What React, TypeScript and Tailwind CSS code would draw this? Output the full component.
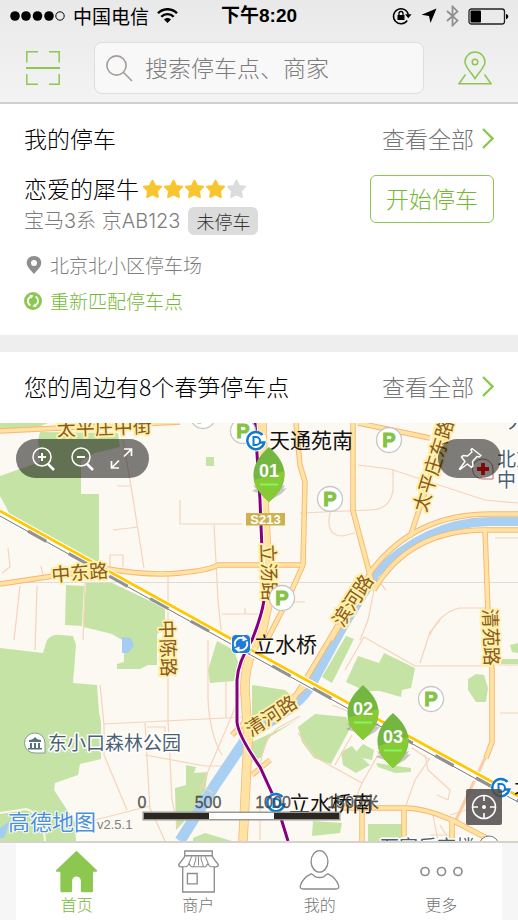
import { ReactNode } from "react";

const cjk = "font-['Noto_Sans_CJK_SC',sans-serif]";
const GREEN = "#8cc850";

function StatusBar() {
  return (
    <div className="grid h-8 grid-cols-[1fr_auto_1fr] items-center px-[9px] text-black">
      <div className="flex items-center gap-2">
        <svg width="56" height="12" viewBox="0 0 56 12" aria-hidden="true">
          {[6, 17, 28.5, 40].map((cx) => (
            <circle key={cx} cx={cx} cy="6" r="4.8" />
          ))}
          <circle cx="51" cy="6" r="4.2" fill="none" stroke="#000" />
        </svg>
        <span className="text-[19px] leading-6">中国电信</span>
        <svg width="21" height="16" viewBox="0 0 21 16" fill="none" stroke="#000" strokeWidth="2.4" aria-hidden="true">
          <path d="M1 5.3C6-.2 15-.2 20 5.3M4.3 8.8c3.4-3.6 9-3.6 12.4 0" />
          <path d="M7 11.6c2-2 5-2 7 0L10.500 15z" fill="#000" stroke="none" />
        </svg>
      </div>
      <span className="font-['Liberation_Sans','Noto_Sans_CJK_SC',sans-serif] text-[19px] font-bold leading-6">
        下午8:20
      </span>
      <div className="flex items-center justify-end gap-[9px]">
        <svg width="20" height="18" viewBox="0 0 20 18" aria-hidden="true">
          <path d="M15.200 13.500A7.500 7.500 0 1 1 16.300 7.500" fill="none" stroke="#000" strokeWidth="1.500" />
          <path d="M13 7.200h6.600l-3.300 4z" />
          <rect x="5.500" y="8" width="7" height="5" />
          <path d="M7 8V6.500a2 2 0 0 1 4 0V8" fill="none" stroke="#000" strokeWidth="1.300" />
        </svg>
        <svg width="16" height="16" viewBox="0 0 16 16" aria-hidden="true">
          <path d="M15.500.500 9.500 15 8 8 .500 6.800z" />
        </svg>
        <svg width="13" height="22" viewBox="0 0 13 22" fill="none" stroke="#8e8e8e" strokeWidth="1.700" aria-hidden="true">
          <path d="M1 6l10.500 9.500L6.500 20.500v-19l5 5L1 16" />
        </svg>
        <svg width="41" height="17" viewBox="0 0 41 17" aria-hidden="true">
          <rect x="1" y="1" width="35.500" height="15" rx="2.500" fill="none" stroke="#222" strokeWidth="1.300" />
          <rect x="2.500" y="2.500" width="10.500" height="12" rx="1" />
          <path d="M38 6c3 .500 3 4.500 0 5z" />
        </svg>
      </div>
    </div>
  );
}

function SearchHeader() {
  return (
    <header className="border-b-2 border-[#d0d0d0] bg-linear-to-b from-[#e9e9e9] to-[#f3f3f3] pb-2">
      <StatusBar />
      <div className="mt-[10px] flex items-center gap-[34px] px-[26px]">
        <button type="button" aria-label="扫一扫">
          <svg width="34" height="34" viewBox="0 0 34 34" fill="none" stroke={GREEN} strokeWidth="1.500">
            <path d="M.800 11.500V.800H12M23 .800h10.200v10.700M.800 23v10.200H12M23 33.200h10.200V23" />
            <path d="M0 17h34" strokeWidth="2" />
          </svg>
        </button>
        <label className="flex h-[52px] min-w-0 flex-1 items-center gap-3 rounded-lg border border-[#dedede] bg-[#f8f8f8] px-[11px]">
          <svg className="shrink-0" width="27" height="27" viewBox="0 0 27 27" fill="none" stroke="#a39c99" strokeWidth="1.600" aria-hidden="true">
            <circle cx="10.500" cy="10.500" r="9.600" />
            <path d="M17.500 17.500l8.500 8.500" />
          </svg>
          <input
            type="search"
            aria-label="搜索"
            placeholder="搜索停车点、商家"
            className="w-full min-w-0 bg-transparent pb-[2px] text-[23px] font-light outline-none placeholder:text-[#7c7c7c]"
          />
        </label>
        <button type="button" aria-label="地图">
          <svg width="34" height="34" viewBox="0 0 34 34" fill="none" stroke={GREEN} strokeWidth="1.500">
            <path d="M17 27.500C13 21 7 16 7 11a10 10 0 0 1 20 0c0 5-6 10-10 16.500z" />
            <circle cx="17" cy="11" r="2.800" />
            <path d="M7.500 23.500L1 32.700h32l-6.500-9.200" />
          </svg>
        </button>
      </div>
    </header>
  );
}

function SectionTitle({ children }: { children: ReactNode }) {
  return (
    <div className="flex h-[71px] items-center justify-between px-6 pb-[2px] text-[23px]">
      <h2 className="font-light text-black">{children}</h2>
      <a href="#all" className="flex items-center gap-2 font-light text-[#757575]">
        查看全部
        <svg width="12" height="21" viewBox="0 0 12 21" fill="none" stroke={GREEN} strokeWidth="2.400" aria-hidden="true">
          <path d="M1 1l9.500 9.500L1 20" />
        </svg>
      </a>
    </div>
  );
}

function MyParking() {
  return (
    <section className="bg-white pb-4">
      <SectionTitle>我的停车</SectionTitle>
      <div className="flex items-start justify-between px-6">
        <div>
          <div className="flex h-7 items-center gap-[3px]">
            <span className="pb-[2px] text-[23px] font-light leading-7 text-black">恋爱的犀牛</span>
            <div className="flex" role="img" aria-label="4 / 5">
              {[1, 2, 3, 4, 5].map((n) => (
                <svg key={n} width="21" height="20" viewBox="0 0 21 20" fill={n < 5 ? "#f9c52f" : "#dcdcdc"}>
                  <path
                    d="M10.500 1.500l2.700 5.300 6 .900-4.200 4.400 1 6-5.500-2.700-5.500 2.700 1-6L1.800 7.700l6-.900z"
                    stroke={n < 5 ? "#f9c52f" : "#dcdcdc"}
                    strokeWidth="1.800"
                    strokeLinejoin="round"
                  />
                </svg>
              ))}
            </div>
          </div>
          <div className="flex h-9 items-center gap-2">
            <span className="font-['Inter','Noto_Sans_CJK_SC',sans-serif] text-xl font-light text-[#7c7c7c]">
              宝马3系 京AB123
            </span>
            <span className="rounded-md bg-[#dcdcdc] px-2 text-[18px] font-light leading-7 text-[#333]">未停车</span>
          </div>
        </div>
        <button
          type="button"
          className="h-12 rounded-md border border-[#8cc850] px-[15px] pb-[2px] text-[23px] font-light text-[#76b836]"
        >
          开始停车
        </button>
      </div>
      <div className="mt-2 flex h-9 items-center gap-2 px-6 text-[19px] font-light text-[#7c7c7c]">
        <svg width="18" height="18" viewBox="0 0 18 18" aria-hidden="true">
          <path d="M10 0C5.500 0 2.700 3 2.700 6.800 2.700 11 7 14.500 10 18c3-3.500 7.300-7 7.300-11.200C17.300 3 14.500 0 10 0zm0 4a3 3 0 1 1 0 6 3 3 0 0 1 0-6z" fill="#8e8e8e" />
        </svg>
        北京北小区停车场
      </div>
      <button type="button" className="flex h-9 items-center gap-2 px-6 text-[19px] font-light text-[#76b836]">
        <svg width="18" height="18" viewBox="0 0 18 18" aria-hidden="true">
          <circle cx="9" cy="9" r="9" fill={GREEN} />
          <g fill="none" stroke="#fff" strokeWidth="1.700">
            <path d="M6.500 13.500C3 11.500 3 6.500 6.800 4.600M11.500 4.500c3.500 2 3.500 7-.300 8.900" />
          </g>
          <path d="M5.500 2.800l4 .700-2.500 3.200zM12.500 15.200l-4-.700 2.500-3.200z" fill="#fff" />
        </svg>
        重新匹配停车点
      </button>
    </section>
  );
}

const parks = [
  "M0 423H48L36 428 0 430Z",
  "M0 476L40 462 38 440 40 432 118 433 120 447 95 453 81 461V494H99V567L88 562 10 515 5 505 0 496Z",
  "M66 585L84 586 82 626 65 625Z",
  "M86 582H110L165 608V628L157 634V665L148 665 140 669H117V664L124 662V641L112 634 96 630 83 627Z",
  "M0 648L43 653 47 640Q52 634 60 635L73 636 76 645 73 683 97 685 99 712 101 722V759L80 764 78 775 55 783 54 790 75 822 76 841H0Z",
  "M217 641L234 650 238 662 234 681 210 683 208 670Z",
  "M186 765L196 767 194 773 208 772 205 790 190 815 176 830 175 788 186 785Z",
  "M193 838L205 833 232 841H193Z",
  "M346 636L354 639 332 683 322 677Z",
  "M358 656L379 663 384 653 415 668 411 688 402 690 401 697 380 691 365 691 346 682Z",
  "M252 685L285 690 292 696 270 712 252 722Z",
  "M321 690L300 718 268 738 262 757 252 762V742L282 728 300 718Z",
  "M298 727L315 714 346 717 352 725 331 764 314 758 302 742Z",
  "M341 752L352 746 360 756 370 765 356 773 343 765ZM356 752L363 744 374 750 372 760 362 758Z",
  "M376 763L411 768V772L395 773 378 767Z",
  "M468 679L476 674 484 675 488 688 486 702H476L468 690Z",
  "M510 645L518 643V653L512 652ZM501 659H518V664H501Z",
  "M313 821L342 823 340 833 312 836Z",
  "M368 824H402V841H368Z",
  "M206 457H214V466H206Z",
];

const lanes = [
  "M123 440L130 480 144 568M117 486H130M113 530L138 527M110 567V555H123V567M180 500V524H243",
  "M214 525L218 600 222 640M168 575V600L168 720 172 800 178 828M165 608L210 630M222 614H258M245 614V608",
  "M8 548L10 567 2 573M41 566L43 575M20 586L14 640M37 586L35 650M85 582L83 640",
  "M100 685L104 725V755L127 810M104 724L245 717M145 723L150 810M145 755L205 766H222M147 727H165V735",
  "M208 640V700Q210 735 222 755M226 680V718M246 680L230 720 200 790M75 825L150 806M200 785L213 793M150 808L165 841",
  "M358 465L390 469 485 500 518 503M393 469V490Q390 510 370 510L300 513M330 513Q325 535 342 536L355 533",
  "M290 602H305M374 590L368 620 360 640M386 590L380 583M430 635Q440 612 460 608H486M495 538H518",
  "M364 637L415 666H495M420 663L430 632 440 620M364 637L345 670M500 713H518M498 665H518",
  "M300 716L278 728Q262 740 260 770M298 733L315 757 362 783 357 795M335 765L352 735M362 783L378 755 390 735M430 758L415 780 405 808",
  "M425 755L428 770 450 790 448 800 437 795M432 810L438 841M500 800L450 815M412 748L430 760M332 705L350 712",
  "M260 840V800M440 825L450 841M430 835H450",
];

const roads = [
  "M0 431L60 428 180 422",
  "M0 584L60 575 108 569Q150 576 180 573T218 565H303",
  "M296 423L300 465 305 482 303 565 286 603 268 638",
  "M353 423V511L374 590",
  "M358 423L430 438",
  "M448 423L410 537",
  "M374 590Q410 528 490 530H518",
  "M232 735L245 722M331 640L372 570Q415 514 490 514H518M338 625L309 674 290 705M310 682L290 700",
  "M485 530L489 640 492 670V742L486 758",
  "M340 808H405Q425 808 452 820L492 841M362 800V841M404 808V841M452 820V841",
  "M252 775L270 760",
];

const mainRoad = "M262 423L264 500 269 600 262 632Q244 660 245 690L248 740 243 841";
const subway = "M255 423L260 500 264 600Q262 615 252 640 238 662 237 680V722Q238 735 260 767L276 802 288 841";

const roadLabels = [
  { text: "太平庄中街", x: 57, y: 436, rotate: -2 },
  { text: "中东路", x: 52, y: 582, rotate: -5 },
  { text: "立汤路", x: 261, y: 544, rotate: 88 },
  { text: "中陈路", x: 160, y: 620, rotate: 88 },
  { text: "清苑路", x: 483, y: 609, rotate: 88 },
  { text: "太平庄东路", x: 426, y: 513, rotate: -73 },
  { text: "滨河路", x: 343, y: 628, rotate: -57 },
  { text: "清河路", x: 251, y: 737, rotate: -33 },
];

const parkingSpots = [
  [203, 416],
  [243, 431],
  [389, 440],
  [330, 499],
  [282, 598],
  [431, 699],
];

function StationMark({ x, y }: { x: number; y: number }) {
  return (
    <g transform={`translate(${x} ${y})`} fill="none" stroke="#0f7bd0">
      <circle r="10.500" fill="#fff" stroke="none" />
      <path d="M6.500 -6A8.600 8.600 0 1 0 8.300 1.500H3.500" strokeWidth="2.500" />
      <path d="M-2.500 -4H0A4 4 0 0 1 0 4H-2.500Z" strokeWidth="2" />
    </g>
  );
}

function MapCanvas() {
  return (
    <svg
      className="absolute inset-0 h-full w-full"
      viewBox="0 423 518 418"
      preserveAspectRatio="xMidYMid slice"
      fontFamily="'Noto Sans CJK SC', sans-serif"
    >
      <rect y="423" width="518" height="418" fill="#fcf9f3" />
      <g fill="#c5e3a5">
        {parks.map((d) => (
          <path key={d} d={d} />
        ))}
      </g>
      <path d="M122 637L131 638 134 646 128 653 122 653ZM0 828L10 821 4 838H0Z" fill="#a5cdf3" />
      <path d="M0 813L26 809Q36 812 43 823L45 841" fill="none" stroke="#fdf6ea" strokeWidth="2" />
      <g fill="none" stroke="#a9cff2">
        <path d="M518 521.500H490Q425 522 372 577" strokeWidth="9" />
        <path d="M374 575L343 625 312 682Q302 705 250 733L215 785 180 841" strokeWidth="11" />
      </g>
      <g fill="none" stroke="#f7d3ba" strokeWidth="1.200">
        {lanes.map((d) => (
          <path key={d} d={d} />
        ))}
      </g>
      <path d="M0 582.500H518" stroke="#dcdcd8" strokeWidth="1" />
      <g fill="none" stroke="#f9b573" strokeWidth="5.500" strokeLinejoin="round">
        <path d="M486 756L455 822" strokeWidth="3" stroke="#f9cda5" />
        {roads.map((d) => (
          <path key={d} d={d} />
        ))}
        <path d={mainRoad} strokeWidth="9.500" />
      </g>
      <g fill="none" stroke="#fee3a2" strokeWidth="3.700" strokeLinejoin="round">
        {roads.map((d) => (
          <path key={d} d={d} />
        ))}
        <path d={mainRoad} strokeWidth="8" />
      </g>

      <g fill="none">
        <path d="M0 515L258 658 518 802" stroke="#fff" strokeWidth="5" />
        <path d="M0 516L258 659 518 802" stroke="#777" strokeWidth="1" />
        <path d="M28 531L258 658 518 801" stroke="#929292" strokeWidth="3.500" strokeDasharray="21 25.500" />
        <path d="M0 511L235 641 310 682 412 738 518 796" stroke="#fff" strokeWidth="5" />
        <path d="M0 511L235 641 310 682 412 738 518 796" stroke="#ffc800" strokeWidth="2.800" />
        <path d={subway} stroke="#fff" strokeWidth="5" />
        <path d={subway} stroke="#86007e" strokeWidth="3" />
      </g>

      <rect x="246" y="513" width="39" height="12.500" fill="#cdb24f" />
      <text
        x="265.500"
        y="523.500"
        fontFamily="'Liberation Sans', sans-serif"
        fontSize="13"
        fontWeight="700"
        textAnchor="middle"
        fill="#fff"
      >
        S213
      </text>

      <g fontSize="19" fill="#8a5a1c" stroke="#fff0a8" strokeWidth="4" strokeLinejoin="round" paintOrder="stroke">
        {roadLabels.map((l) => (
          <text key={l.text} transform={`translate(${l.x} ${l.y}) rotate(${l.rotate})`}>
            {l.text}
          </text>
        ))}
      </g>

      {parkingSpots.map(([x, y]) => (
        <g key={`${x}-${y}`}>
          <circle cx={x} cy={y} r="12.500" fill="#fff" stroke="#c6c6c6" strokeWidth="1.300" />
          <text
            x={x}
            y={y + 7}
            fontFamily="'Liberation Sans', sans-serif"
            fontSize="20"
            fontWeight="700"
            textAnchor="middle"
            fill="#84c343"
            stroke="#84c343"
            strokeWidth="1"
          >
            P
          </text>
        </g>
      ))}

      <StationMark x={256} y={441} />
      <StationMark x={276} y={803} />
      <StationMark x={501} y={788} />
      <g transform="translate(241 644)" fill="none" stroke="#fff">
        <rect x="-9.500" y="-9.500" width="19" height="19" rx="4" fill="#1f7bd9" />
        <path d="M-5.600 2.500A6.100 6.100 0 0 1 2 -5.800M5.600 -2.500A6.100 6.100 0 0 1 -2 5.800" strokeWidth="1.900" />
        <path d="M1.500 -8.500L6.500 -4.500 1.500 -2.500ZM-1.500 8.500L-6.500 4.500 -1.500 2.500Z" fill="#fff" stroke="none" />
      </g>

      <g fill="#4c5f73" fontSize="19" stroke="#fff" strokeWidth="3" strokeLinejoin="round" paintOrder="stroke">
        <text x="48" y="750">东小口森林公园</text>
        <text x="497" y="466">北京</text>
        <text x="497" y="487">中日</text>
        <text x="508" y="428">大</text>
        <text x="380" y="854">万家乐商楼</text>
      </g>
      <g transform="translate(35 743)">
        <path d="M-1 -10A10 10 0 1 0 0 10H10V0A10 10 0 0 0 -1 -10Z" fill="#fff" stroke="#8b9a91" />
        <path d="M-6 -3Q-2 -3 0 -6 2 -3 6 -3V-1H-6ZM-5 0H-3V5H-5ZM-1 0H1V5H-1ZM3 0H5V5H3ZM-7 5H7V6.500H-7Z" fill="#56707e" />
      </g>
      <g transform="translate(483 469)">
        <path d="M-1 -10A10 10 0 1 0 0 10H10V0A10 10 0 0 0 -1 -10Z" fill="#fff" fillOpacity=".25" stroke="#b07a7a" />
        <path d="M-6 0H6M0 -6V6" stroke="#ff1010" strokeWidth="3.800" />
      </g>
      <circle cx="489" cy="846" r="10" fill="#fff" stroke="#777" />

      <g fill="#111" fontSize="21">
        <text x="269" y="448">天通苑南</text>
        <text x="254" y="652">立水桥</text>
        <text x="289" y="811">立水桥南</text>
        <text x="514" y="795">北</text>
      </g>

      <g
        fill="#444"
        fillOpacity=".85"
        fontFamily="'Liberation Sans', 'Noto Sans CJK SC', sans-serif"
        fontSize="16"
        textAnchor="middle"
        stroke="#444"
        strokeWidth=".3"
      >
        <text x="142" y="808">0</text>
        <text x="208" y="808">500</text>
        <text x="273" y="808">1000</text>
        <text x="353" y="808">1500米</text>
      </g>
      <rect x="142.500" y="811.500" width="198" height="9" fill="#999" />
      <path d="M144 813H209V819H144ZM274 813H339V819H274Z" fill="#2c2620" />
      <path d="M209 813H274V819H209Z" fill="#fdfdfb" />

      <text x="8" y="830" fontSize="22" fill="#4a90dc" stroke="#fff" strokeWidth="2" strokeLinejoin="round" paintOrder="stroke">
        高德地图
      </text>
      <text x="97" y="829" fontSize="13" fontFamily="'Liberation Sans', sans-serif" fill="#808080">
        v2.5.1
      </text>
    </svg>
  );
}

function LeafPin({ label, className }: { label: string; className: string }) {
  return (
    <button type="button" className={`absolute h-14 w-8 ${className}`}>
      <svg className="absolute inset-0 overflow-visible" width="32" height="56" viewBox="0 0 32 56" aria-hidden="true">
        <path d="M8 47L-1 44 3 42 0 38 16 42 32 38 30 42 34 41 28 47 16 54Z" fill="#666" opacity=".35" />
        <path d="M16 0C26 9 32 18 31.500 29S24 48 16 55C8 48 1 40 .500 29S6 9 16 0Z" fill="#74b740" />
        <path d="M31.500 24C32 38 24 48 16 55 8 48 2 41 .800 33Z" fill="#86ca36" />
        <path d="M7 37.500H25" stroke="#85f562" strokeWidth="2" />
      </svg>
      <span className="absolute inset-x-0 top-3 text-center font-['Liberation_Sans',sans-serif] text-[18px] font-bold leading-6 text-white">
        {label}
      </span>
    </button>
  );
}

function NearbyMap() {
  return (
    <div className="relative min-h-[417px] flex-1 overflow-hidden">
      <MapCanvas />
      <LeafPin label="01" className="left-[253px] top-6" />
      <LeafPin label="02" className="left-[347px] top-[262px]" />
      <LeafPin label="03" className="left-[377px] top-[290px]" />

      <div className="absolute left-4 top-4 flex h-[39px] items-center gap-4 rounded-full bg-black/50 px-4">
        <button type="button" aria-label="放大">
          <svg width="23" height="24" viewBox="0 0 23 24" fill="none" stroke="#fff">
            <circle cx="10" cy="10" r="9" strokeWidth="1.500" />
            <path d="M10 6v8M6 10h8" strokeWidth="2" />
            <path d="M16 17l6 6" strokeWidth="2.500" />
          </svg>
        </button>
        <button type="button" aria-label="缩小">
          <svg width="23" height="24" viewBox="0 0 23 24" fill="none" stroke="#fff">
            <circle cx="10" cy="10" r="9" strokeWidth="1.500" />
            <path d="M6 10h8" strokeWidth="2" />
            <path d="M16 17l6 6" strokeWidth="2.500" />
          </svg>
        </button>
        <button type="button" aria-label="全屏">
          <svg width="23" height="23" viewBox="0 0 23 23" fill="none" stroke="#fff" strokeWidth="1.700">
            <path d="M14 2h7.500v7M21.500 2L14 9.500M1.500 14v7H9M1.500 21L9 13.500" />
          </svg>
        </button>
      </div>

      <button
        type="button"
        aria-label="固定"
        className="absolute right-[17px] top-4 flex h-[39px] w-[63px] items-center justify-center rounded-full bg-black/50"
      >
        <svg width="24" height="24" viewBox="0 0 24 24" fill="none" stroke="#fff" strokeWidth="1.500" strokeLinejoin="round">
          <path d="M14 1.500l9 7-2 1.500-2-.500-4.500 5 .500 4.500-1.500 1.500-4-3.500-7.500 5.500-.500-.500 5.500-7.500L3.500 10 5 8.500l4.500.500L14 5l-1-2z" />
        </svg>
      </button>

      <button
        type="button"
        aria-label="定位"
        className="absolute bottom-4 right-4 flex size-9 items-center justify-center rounded-xs bg-[#4f4b4b]/85"
      >
        <svg width="26" height="26" viewBox="0 0 26 26" fill="none" stroke="#fff" strokeWidth="1.600">
          <circle cx="13" cy="13" r="11.500" />
          <path d="M13 1.500V7M13 19v5.500M1.500 13H7M19 13h5.500" />
          <circle cx="13" cy="13" r="2" fill="#fff" stroke="none" />
        </svg>
      </button>
    </div>
  );
}

const tabs = [
  {
    label: "首页",
    icon: (
      <path
        d="M63 2L124 60Q126 64 122 65H112V122Q112 126 108 126H80Q76 126 76 122V92A13 13 0 0 0 50 92V122Q50 126 46 126H19Q15 126 15 122V65H4Q0 64 2 60Z"
        fill={GREEN}
      />
    ),
  },
  {
    label: "商户",
    icon: (
      <g fill="none" stroke="#8c8c8c" strokeWidth="4">
        <path d="M22 3H104V17H22ZM22 19Q14 32 4 43 4 50 12 50H16V125H110V50H114Q122 50 122 43 112 32 104 19" />
        <path d="M43 19L35 38Q32 50 22 50H16M55 19V28L48 50Q40 52 35 40M71 19V28L78 50Q86 52 91 40M83 19L91 38Q94 50 104 50H110M48 50H78M63 19V46" strokeWidth="3" />
        <path d="M30 70H59V101H30Z" />
      </g>
    ),
  },
  {
    label: "我的",
    icon: (
      <g fill="none" stroke="#8c8c8c" strokeWidth="4">
        <ellipse cx="63" cy="34" rx="25" ry="32" />
        <path d="M38 71Q46 73 49 79 63 85 77 79 80 73 88 71 113 83 120 106 122 116 112 116H14Q4 116 6 106 13 83 38 71Z" />
      </g>
    ),
  },
  {
    label: "更多",
    icon: (
      <g fill="none" stroke="#8c8c8c" strokeWidth="5">
        <circle cx="14" cy="64" r="12" />
        <circle cx="63" cy="64" r="12" />
        <circle cx="112" cy="64" r="12" />
      </g>
    ),
  },
];

function TabBar() {
  return (
    <nav className="border-t-2 border-[#d3d3cb] bg-[#f6f6f6] px-4">
      <ul className="grid grid-cols-4 bg-white">
        {tabs.map((tab, i) => (
          <li key={tab.label}>
            <a
              href={`#tab-${i}`}
              className={`flex flex-col items-center pb-1 pt-[7px] text-base font-light leading-[23px] ${
                i === 0 ? "text-[#76b836]" : "text-[#757575]"
              }`}
            >
              <svg width="43" height="43" viewBox="-1 0 128 128" aria-hidden="true">
                {tab.icon}
              </svg>
              {tab.label}
            </a>
          </li>
        ))}
      </ul>
    </nav>
  );
}

export default function App() {
  return (
    <div className={`flex min-h-screen flex-col bg-white ${cjk}`}>
      <SearchHeader />
      <MyParking />
      <div className="h-[17px] bg-[#eee]" />
      <section className="flex flex-1 flex-col">
        <SectionTitle>您的周边有8个春笋停车点</SectionTitle>
        <NearbyMap />
      </section>
      <TabBar />
    </div>
  );
}
